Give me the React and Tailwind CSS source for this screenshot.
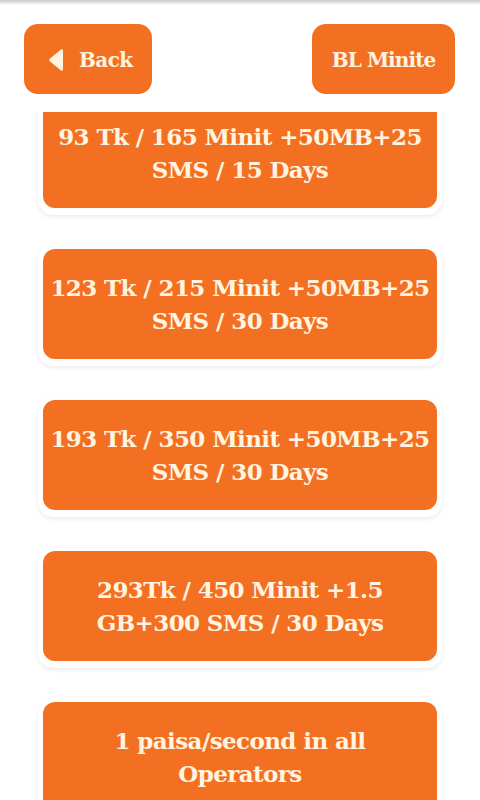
import { useState } from 'react'

const plans = [
  ['93 Tk / 165 Minit +50MB+25', 'SMS / 15 Days'],
  ['123 Tk / 215 Minit +50MB+25', 'SMS / 30 Days'],
  ['193 Tk / 350 Minit +50MB+25', 'SMS / 30 Days'],
  ['293Tk / 450 Minit +1.5', 'GB+300 SMS / 30 Days'],
  ['1 paisa/second in all', 'Operators'],
]

function BackArrow() {
  return (
    <svg width="16" height="24" viewBox="0 0 16 24" className="shrink-0">
      <path d="M13 1.5 Q15 0.8 15 3 L15 21 Q15 23.2 13 22.5 L1.8 13.3 Q0.5 12 1.8 10.7 Z" fill="#fff4e0" />
    </svg>
  )
}

export default function App() {
  const [selected, setSelected] = useState(null)

  return (
    <div
      className="flex h-[800px] w-[480px] flex-col overflow-hidden bg-white"
      style={{ fontFamily: '"DejaVu Serif", "Liberation Serif", serif' }}
    >
      <div className="h-[5px] shrink-0 bg-gradient-to-b from-[#c8c8c8] to-white" />

      <div className="flex shrink-0 items-center justify-between pl-[24px] pr-[25px] pt-[19px]">
        <button
          type="button"
          className="flex h-[70px] w-[128px] items-center gap-[15px] rounded-[14px] bg-[#f37022] pl-[48px] pt-[2px] text-[20px] font-bold tracking-[-0.6px] text-[#fff4e0]"
        >
          <span className="-ml-[24px] flex">
            <BackArrow />
          </span>
          Back
        </button>
        <button
          type="button"
          className="flex h-[70px] w-[143px] items-center justify-center rounded-[14px] bg-[#f37022] pt-[2px] text-[20px] font-bold tracking-[-0.9px] text-[#fff4e0]"
        >
          BL Minite
        </button>
      </div>

      {/* list is scrolled a little, so the first card sits under the header */}
      <div className="mt-[18px] flex-1 overflow-hidden">
        <div className="-mt-[19px] flex flex-col gap-[29px] px-[38px]">
          {plans.map((lines, i) => (
            <div
              key={i}
              className="rounded-[15px] bg-white px-[5px] pb-[7px] pt-[5px] shadow-[0_2px_4px_rgba(0,0,0,0.08)]"
            >
              <button
                type="button"
                onClick={() => setSelected(i)}
                className={
                  'flex h-[110px] w-full flex-col items-center justify-center whitespace-nowrap rounded-[12px] text-center text-[23px] font-bold leading-[33px] tracking-[-0.6px] text-[#fff4e0] ' +
                  (selected === i ? 'bg-[#e0641c]' : 'bg-[#f37022]')
                }
              >
                {lines.map((l) => (
                  <span key={l} className="block">
                    {l}
                  </span>
                ))}
              </button>
            </div>
          ))}
        </div>
      </div>
    </div>
  )
}
